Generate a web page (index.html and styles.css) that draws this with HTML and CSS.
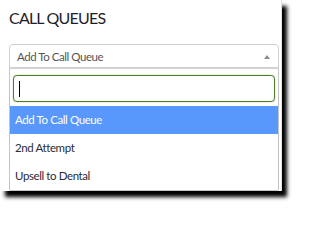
FILE: index.html
```html
<!DOCTYPE html>
<html>
<head>
<meta charset="utf-8">
<link rel="stylesheet" href="styles.css">
</head>
<body>
<div class="window">
  <h2 class="title">CALL QUEUES</h2>
  <div class="select">
    <div class="select-head">
      <span class="select-value">Add To Call Queue</span>
      <span class="arrow"></span>
    </div>
    <div class="panel">
      <div class="search-wrap">
        <div class="search"><span class="caret"></span></div>
      </div>
      <ul class="options">
        <li class="option active">Add To Call Queue</li>
        <li class="option">2nd Attempt</li>
        <li class="option">Upsell to Dental</li>
      </ul>
    </div>
  </div>
</div>
</body>
</html>
```

FILE: styles.css
```css
html, body {
  margin: 0;
  padding: 0;
  background: #fff;
}
body {
  font-family: Lato, "Liberation Sans", sans-serif;
  width: 293px;
  height: 205px;
}
.window {
  width: 281px;
  height: 191px;
  border-right: 1px solid #e2e2e2;
  background: #fff;
  box-shadow: 5px 6px 4px 0 #000;
  overflow: hidden;
}
.title {
  margin: 8px 0 0 9px;
  font-size: 16px;
  line-height: 20px;
  font-weight: 400;
  color: #1e1e2a;
  letter-spacing: -0.8px;
}
.select {
  margin: 16px 2px 0 9px;
}
.select-head {
  display: flex;
  align-items: center;
  justify-content: space-between;
  height: 22px;
  border: 1px solid #cfcfcf;
  border-radius: 4px 4px 0 0;
  padding: 0 7px 0 7px;
}
.select-value {
  font-size: 11.5px;
  color: #555;
  letter-spacing: -0.45px;
  line-height: 22px;
  padding-top: 2px;
}
.arrow {
  width: 0;
  height: 0;
  border-left: 3px solid transparent;
  border-right: 3px solid transparent;
  border-bottom: 4px solid #8a8a8a;
  margin-right: 1px;
  margin-top: 2px;
}
.panel {
  border: 1px solid #c4c4c4;
  border-top: 1px solid #d6d6d6;
  border-radius: 0 0 2px 2px;
}
.search-wrap {
  padding: 6px 3px 4px 3px;
}
.search {
  height: 25px;
  border: 1px solid #4d7b2b;
  box-shadow: 0 0 1px #4d7b2b;
  border-radius: 4px;
  display: flex;
  align-items: center;
  padding-left: 5px;
}
.caret {
  width: 1px;
  height: 16px;
  background: #000;
}
.options {
  list-style: none;
  margin: 0;
  padding: 0;
}
.option {
  height: 28px;
  line-height: 28px;
  padding-left: 5px;
  font-size: 11.5px;
  letter-spacing: -0.4px;
  color: #2b2b33;
}
.option.active {
  background: #5897fb;
  color: #fff;
}
```
